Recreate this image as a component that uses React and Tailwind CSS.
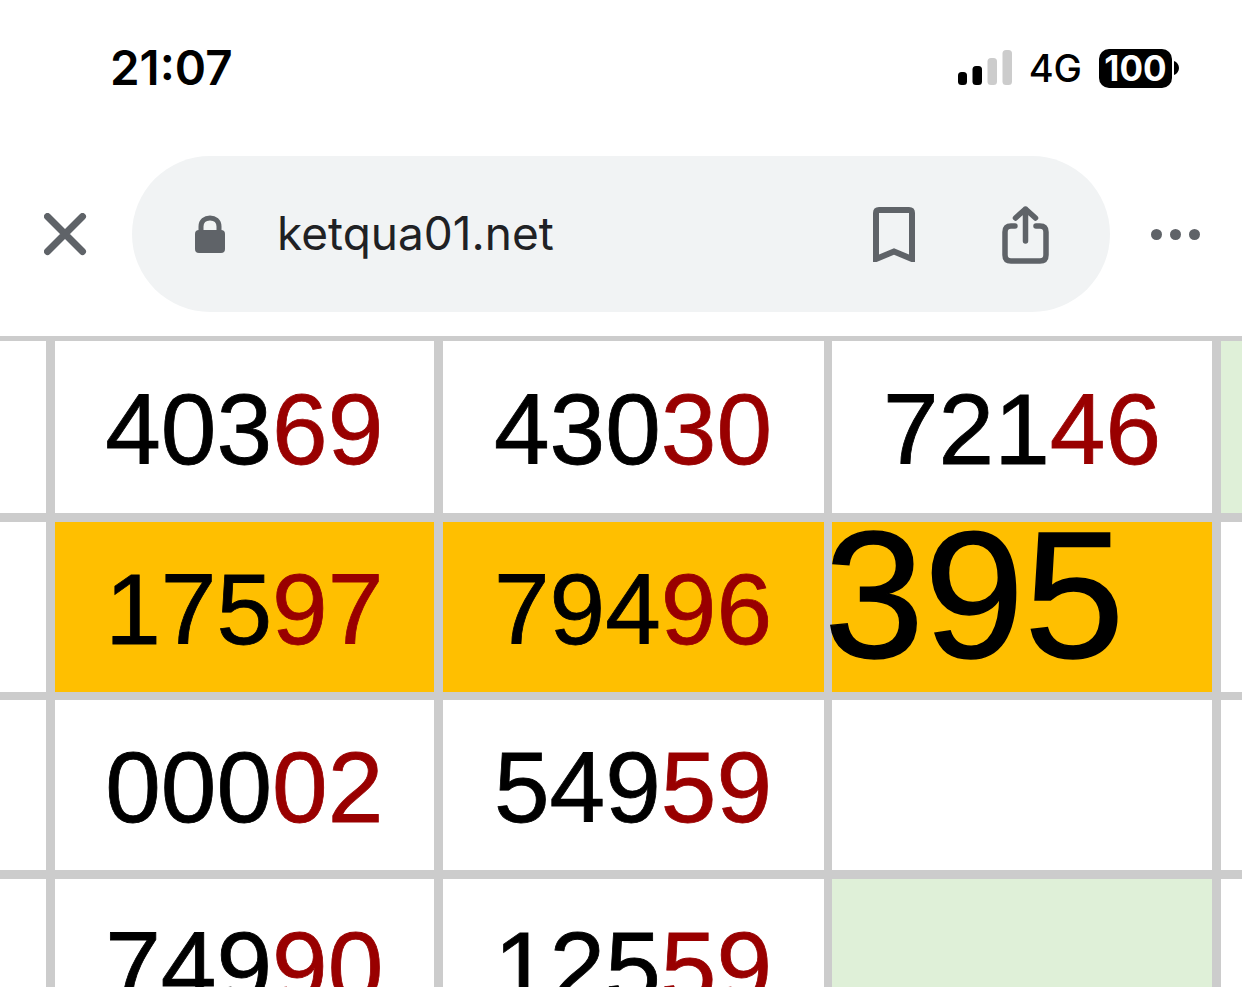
import React from 'react';

const rows = [
  [['403', '69'], ['430', '30'], ['721', '46']],
  [['175', '97'], ['794', '96'], null],
  [['000', '02'], ['549', '59'], ['', '']],
  [['749', '90'], ['125', '59'], ['', '']],
];

// Number cell: first digits black, last two dark red
const NumCell = ({ value, yellow }) => (
  <div className={`flex items-center justify-center pt-[4px] text-[100px] leading-none [-webkit-text-stroke:0.8px] ${yellow ? 'bg-[#ffbf00]' : 'bg-white'}`}>
    <span className="text-black">{value[0]}</span>
    <span className="text-[#990000]">{value[1]}</span>
  </div>
);

const SideCell = ({ green }) => <div className={green ? 'bg-[#dff0d8]' : 'bg-white'} />;

const SignalIcon = () => (
  <svg width="56" height="36" viewBox="0 0 56 36">
    <rect x="1" y="22" width="9" height="13" rx="3.5" fill="#000" />
    <rect x="15.5" y="16" width="9.5" height="19" rx="3.5" fill="#000" />
    <rect x="30.5" y="8" width="9.5" height="27" rx="3.5" fill="#ccc" />
    <rect x="45.5" y="0" width="9.5" height="35" rx="3.5" fill="#ccc" />
  </svg>
);

const CloseIcon = () => (
  <svg width="44" height="44" viewBox="0 0 44 44" fill="none" stroke="#5f6368" strokeWidth="7" strokeLinecap="round">
    <path d="M3.5 3.5L38.5 38.5M38.5 3.5L3.5 38.5" />
  </svg>
);

const LockIcon = () => (
  <svg width="32" height="38" viewBox="0 0 32 38">
    <path d="M7 16V11.5C7 6 11 3 16 3C21 3 25 6 25 11.5V16" fill="none" stroke="#5f6368" strokeWidth="5" />
    <rect x="1" y="15" width="30" height="23" rx="4" fill="#5f6368" />
  </svg>
);

const BookmarkIcon = () => (
  <svg width="44" height="56" viewBox="0 0 44 56" fill="none" stroke="#5f6368" strokeWidth="6">
    <path d="M3 53V7C3 5 4 4 6 4H36C38 4 39 5 39 7V53L21 45.5Z" />
  </svg>
);

const ShareIcon = () => (
  <svg width="48" height="60" viewBox="0 0 48 60" fill="none" stroke="#5f6368" strokeWidth="5.5" strokeLinecap="round" strokeLinejoin="round">
    <path d="M23.5 37V5M13.5 14L23.5 5L33.5 14" />
    <path d="M13 22H9C5 22 3 24 3 28V51C3 55 5 57 9 57H38C42 57 44 55 44 51V28C44 24 42 22 38 22H34" />
  </svg>
);

export default function App() {
  return (
    <div className="flex h-[987px] w-[1242px] flex-col overflow-hidden bg-white font-['Liberation_Sans',sans-serif]">
      {/* status bar */}
      <div className="flex h-[136px] shrink-0 items-center justify-between pl-[110px] pr-[63px] font-['Inter',sans-serif]">
        <span className="text-[47.5px] font-semibold leading-none text-black">21:07</span>
        <div className="flex items-center">
          <SignalIcon />
          <span className="ml-[16px] text-[38px] font-medium leading-none text-black">4G</span>
          <div className="ml-[17px] flex h-[39px] w-[73px] items-center justify-center rounded-[10px] bg-black text-[35px] font-bold leading-none text-white">100</div>
          <svg className="ml-[2px]" width="5" height="14" viewBox="0 0 5 14"><path d="M0 0C3 1 5 4 5 7C5 10 3 13 0 14Z" fill="#000" /></svg>
        </div>
      </div>

      {/* url bar */}
      <div className="flex h-[200px] shrink-0 items-start pl-[44px] pr-[41px] pt-[20px]">
        <div className="mt-[57px] w-[44px] shrink-0"><CloseIcon /></div>
        <div className="ml-[44px] flex h-[156px] w-[978px] shrink-0 items-center rounded-[78px] bg-[#f1f3f4] pl-[62px]">
          <LockIcon />
          <span className="ml-[51px] w-[596px] pb-[2px] font-['Inter',sans-serif] text-[46px] leading-none text-[#202124]">ketqua01.net</span>
          <BookmarkIcon />
          <div className="ml-[85px]"><ShareIcon /></div>
        </div>
        <div className="ml-[41px] mt-[73px] flex gap-[8px]">
          <span className="size-[11px] rounded-full bg-[#5f6368]" />
          <span className="size-[11px] rounded-full bg-[#5f6368]" />
          <span className="size-[11px] rounded-full bg-[#5f6368]" />
        </div>
      </div>

      {/* table */}
      <div className="grid flex-1 grid-cols-[46px_379.5px_381px_380px_22px] grid-rows-[172px_170px_170px_172px] gap-x-[8.5px] gap-y-[8.5px] bg-[#cccccc] pt-[5px]">
        {rows.map((row, i) => (
          <React.Fragment key={i}>
            <SideCell />
            <NumCell value={row[0]} yellow={i === 1} />
            <NumCell value={row[1]} yellow={i === 1} />
            {row[2] === null ? (
              <div className="bg-[#ffbf00] text-[180px] leading-none text-black [-webkit-text-stroke:1.5px]">
                <div className="ml-[-8px] mt-[-17px]">395</div>
              </div>
            ) : i === 3 ? (
              <SideCell green />
            ) : (
              <NumCell value={row[2]} />
            )}
            <SideCell green={i === 0} />
          </React.Fragment>
        ))}
      </div>
    </div>
  );
}
